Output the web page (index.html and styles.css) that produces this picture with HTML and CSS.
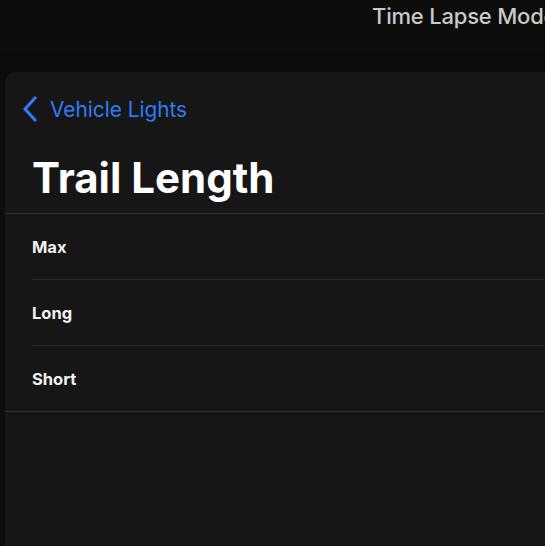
FILE: index.html
```html
<!DOCTYPE html>
<html>
<head>
<meta charset="utf-8">
<link rel="stylesheet" href="styles.css">
</head>
<body>
<header class="topbar"><span class="mode">Time Lapse Mode</span></header>
<main class="panel">
  <nav class="back">
    <svg class="chev" width="18" height="26" viewBox="0 0 18 26"><path d="M14 2 L4 13 L14 24" fill="none" stroke="#2f7cf6" stroke-width="3.2" stroke-linecap="round" stroke-linejoin="round"/></svg>
    <span class="back-label">Vehicle Lights</span>
  </nav>
  <h1 class="title">Trail Length</h1>
  <ul class="list">
    <li class="row">Max</li>
    <li class="row">Long</li>
    <li class="row">Short</li>
  </ul>
</main>
</body>
</html>
```
FILE: styles.css
```css
html, body {
  margin: 0;
  padding: 0;
  height: 100%;
}
body {
  background: #0c0d0a;
  font-family: Inter, "Noto Sans", sans-serif;
  overflow: hidden;
  display: flex;
  flex-direction: column;
}
.topbar {
  height: 48px;
  border-bottom: 1px solid #121310;
  padding-left: 372px;
  white-space: nowrap;
  overflow: hidden;
  box-sizing: content-box;
}
.mode {
  display: block;
  color: #c9c9c9;
  font-size: 22px;
  font-weight: 500;
  line-height: 32px;
  letter-spacing: -0.2px;
}
.panel {
  flex: 1;
  margin: 23px 0 0 5px;
  background: #161616;
  border-radius: 11px 0 0 0;
}
.back {
  display: flex;
  align-items: center;
  height: 30px;
  margin-top: 22px;
  padding-left: 16px;
}
.chev {
  display: block;
  margin-right: 11px;
}
.back-label {
  color: #2f7cf6;
  font-size: 20.8px;
  font-weight: 400;
}
.title {
  margin: 29px 0 0 0;
  padding: 0 0 10px 27px;
  height: 50px;
  line-height: 50px;
  color: #ffffff;
  font-size: 42px;
  font-weight: 700;
  letter-spacing: 0;
  border-bottom: 1px solid #2f2f2f;
}
.list {
  list-style: none;
  margin: 0;
  padding: 0;
  border-bottom: 1px solid #2f2f2f;
}
.row {
  margin-left: 27px;
  height: 65px;
  display: flex;
  align-items: center;
  color: #f2f2f2;
  font-size: 16.5px;
  font-weight: 700;
}
.row + .row {
  border-top: 1px solid #2a2a2a;
}
```
